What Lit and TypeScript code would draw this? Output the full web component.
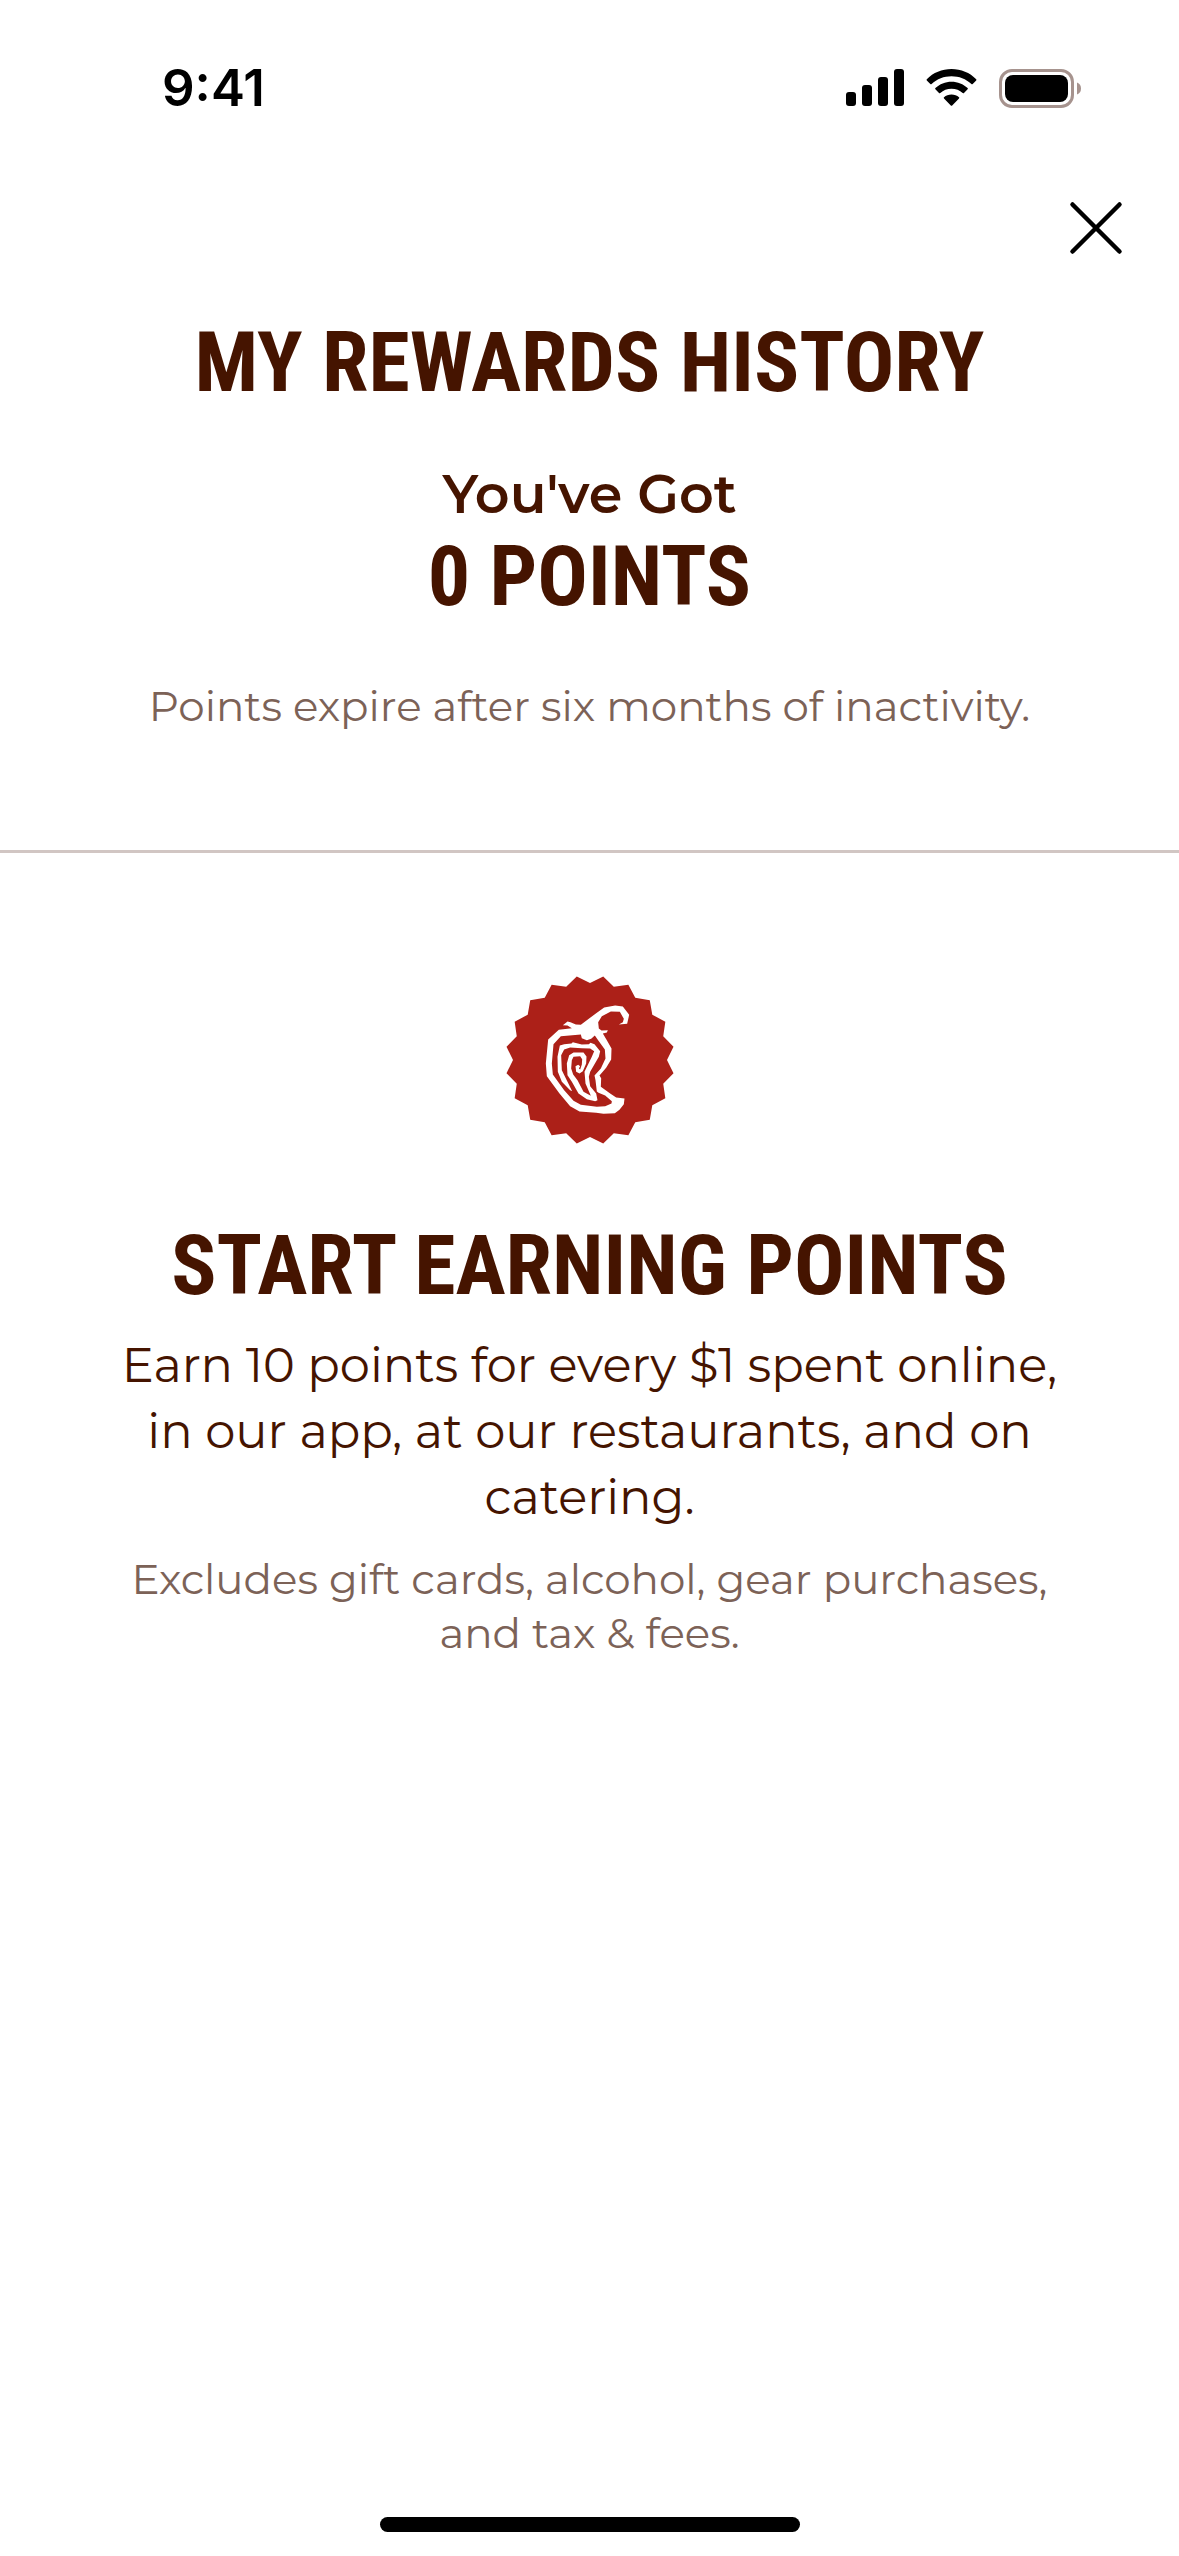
import { LitElement, html, css, svg } from "lit";
import { customElement, property } from "lit/decorators.js";

/** Outline of a scalloped seal, as alternating outer and inner points. */
function sealPoints(tips: number, outer: number, inner: number, center: number): string {
  const points: string[] = [];
  for (let i = 0; i < tips * 2; i++) {
    const angle = (i * Math.PI) / tips;
    const radius = i % 2 === 0 ? inner : outer;
    points.push(
      `${(center + radius * Math.sin(angle)).toFixed(1)},${(center - radius * Math.cos(angle)).toFixed(1)}`,
    );
  }
  return points.join(" ");
}

@customElement("status-bar")
export class StatusBar extends LitElement {
  @property() time = "9:41";

  static styles = css`
    :host {
      display: flex;
      align-items: center;
      justify-content: space-between;
      height: 176px;
      padding: 0 98px 0 162px;
      box-sizing: border-box;
      color: #000;
      font-family: Inter, "Liberation Sans", sans-serif;
    }
    .time {
      font-size: 51px;
      line-height: 60px;
      font-weight: 600;
    }
    .icons {
      display: flex;
      align-items: center;
      gap: 22px;
    }
    svg {
      display: block;
    }
  `;

  render() {
    return html`
      <span class="time">${this.time}</span>
      <div class="icons">
        <svg width="58" height="38" viewBox="0 0 58 38" role="img" aria-label="Signal">
          <rect x="0" y="23" width="10" height="14" rx="3" />
          <rect x="16" y="16" width="10" height="21" rx="3" />
          <rect x="32" y="8" width="10" height="29" rx="3" />
          <rect x="48" y="0" width="10" height="37" rx="3" />
        </svg>
        <svg width="51" height="38" viewBox="0 0 51 38" role="img" aria-label="Wi-Fi">
          <path d="M25.500 0C35 0 43.800 3.700 50.200 10.200Q50.700 10.800 50.200 11.400L46.700 15Q46 15.500 45.400 15C40 9.900 33 7.200 25.500 7.200S11 9.900 5.600 15Q5 15.500 4.300 15L.8 11.400Q.3 10.800.8 10.200C7.200 3.700 16 0 25.500 0Z" />
          <path d="M25.500 12.700C31.700 12.700 37.300 15 41.600 19.100Q42.200 19.700 41.600 20.300L38 24Q37.400 24.500 36.700 24C33.700 21.300 29.800 19.800 25.500 19.800S17.300 21.300 14.300 24Q13.600 24.500 13 24L9.400 20.300Q8.800 19.700 9.400 19.100C13.700 15 19.300 12.700 25.500 12.700Z" />
          <path d="M25.500 25.500C28.400 25.500 31 26.500 33 28.200Q33.600 28.800 33 29.400L26.200 36.400Q25.500 37 24.800 36.400L18 29.400Q17.400 28.800 18 28.200C20 26.500 22.600 25.500 25.500 25.500Z" />
        </svg>
        <svg width="82" height="39" viewBox="0 0 82 39" role="img" aria-label="Battery">
          <rect x="1.500" y="1.500" width="72" height="36" rx="11.500" fill="none" stroke="#a6938e" stroke-width="3" />
          <rect x="6" y="6" width="63" height="27" rx="8" />
          <path d="M78 13.500Q82 15 82 19.500T78 25.500Z" fill="#a6938e" />
        </svg>
      </div>
    `;
  }
}

@customElement("pepper-seal")
export class PepperSeal extends LitElement {
  static styles = css`
    :host {
      display: block;
    }
    svg {
      display: block;
    }
    .seal {
      fill: #ac2018;
    }
    .pepper {
      fill: #fff;
      fill-rule: evenodd;
    }
  `;

  render() {
    return html`
      <svg width="168" height="168" viewBox="47.500 47.500 504 504" aria-hidden="true">
        ${svg`<polygon class="seal" points=${sealPoints(20, 253.6, 231, 299.5)} />`}
        <path
          class="pepper"
          d="M218 195 232 184 241 186 257 193 272 194 318 159 342 142 375 136 398 139 417 164 411 191 386 193 398 186 401 176 389 155 362 154 335 168 324 186 326 205 334 211 353 210 350 217 338 220 350 240 364 265 363 298 348 323 328 346 333 354 332 380 360 400 378 412 403 415 401 432 388 449 374 459 340 461 318 458 268 454 240 438 208 400 170 348 167 310 174 238 206 209 245 204 232 196ZM212 228 272 223 275 234 290 240 303 236 314 226 326 243 344 268 346 295 332 325 313 346 316 360 320 394 325 398 345 406 365 423 364 430 345 438 320 440 272 434 250 422 222 390 188 343 185 310 190 252Z"
        />
        <path
          class="pepper"
          d="M209 256 222 252 244 250 248 246 275 253 296 252 301 248 313 252 330 273 326 290 300 335 296 350 300 378 318 400 322 420 315 423 290 417 265 400 245 365 232 345 230 310 237 285 250 277 280 277 289 289 288 310 278 333 268 340 258 335 256 318 264 314 270 318 266 325 270 328 275 313 276 297 270 288 250 290 245 300 243 325 249 343 262 360 280 395 302 407 286 370 283 335 305 290 312 273 300 265 275 264 240 262 222 268 213 285 215 330 232 365 246 393 240 390 215 365 203 335 202 290Z"
        />
      </svg>
    `;
  }
}

@customElement("app-root")
export class AppRoot extends LitElement {
  @property({ type: Number }) points = 0;

  static styles = css`
    :host {
      display: flex;
      flex-direction: column;
      min-height: 100vh;
      background: #fff;
      color: #451400;
      font-family: Gotham, Montserrat, Inter, "Liberation Sans", sans-serif;
      text-align: center;
    }
    .toolbar {
      display: flex;
      justify-content: flex-end;
      padding: 0 31px;
    }
    .close {
      display: grid;
      place-items: center;
      width: 104px;
      height: 104px;
      padding: 0;
      border: 0;
      background: none;
      color: #000;
      cursor: pointer;
    }
    h1,
    h2,
    p {
      margin: 0;
    }
    h1,
    h2,
    .points {
      font-family: "Trade Gothic", "Roboto Condensed", "Liberation Sans Narrow", "Liberation Sans", sans-serif;
      font-size: 84px;
      line-height: 96px;
      font-weight: 700;
    }
    .summary {
      display: flex;
      flex-direction: column;
      padding: 35px 48px 117px;
      border-bottom: 3px solid #d1c6c3;
    }
    .label {
      margin-top: 50px;
      font-size: 54px;
      line-height: 66px;
      font-weight: 600;
    }
    .note {
      font-size: 42px;
      line-height: 54px;
      color: #7c6257;
    }
    .summary .note {
      margin-top: 54px;
    }
    .points {
      margin-top: 2px;
    }
    .earn {
      display: flex;
      flex-direction: column;
      align-items: center;
      padding: 123px 96px;
    }
    h2 {
      margin-top: 74px;
    }
    .lead {
      margin-top: 18px;
      font-size: 48px;
      line-height: 66px;
    }
    .earn .note {
      margin-top: 22px;
    }
    .home {
      display: flex;
      justify-content: center;
      margin-top: auto;
      padding-bottom: 24px;
    }
    .handle {
      width: 420px;
      height: 15px;
      border-radius: 8px;
      background: #000;
    }
  `;

  render() {
    return html`
      <status-bar></status-bar>
      <nav class="toolbar">
        <button class="close" type="button" aria-label="Close">
          <svg width="54" height="54" viewBox="0 0 54 54" aria-hidden="true">
            <path d="M3.500 3.500 50.500 50.500M50.500 3.500 3.500 50.500" fill="none" stroke="currentColor" stroke-width="4.500" stroke-linecap="round" />
          </svg>
        </button>
      </nav>
      <header class="summary">
        <h1>MY REWARDS HISTORY</h1>
        <p class="label">You've Got</p>
        <p class="points">${this.points} POINTS</p>
        <p class="note">Points expire after six months of inactivity.</p>
      </header>
      <main class="earn">
        <pepper-seal></pepper-seal>
        <h2>START EARNING POINTS</h2>
        <p class="lead">Earn 10 points for every $1 spent online, in our app, at our restaurants, and on catering.</p>
        <p class="note">Excludes gift cards, alcohol, gear purchases, and tax &amp; fees.</p>
      </main>
      <footer class="home"><div class="handle"></div></footer>
    `;
  }
}
